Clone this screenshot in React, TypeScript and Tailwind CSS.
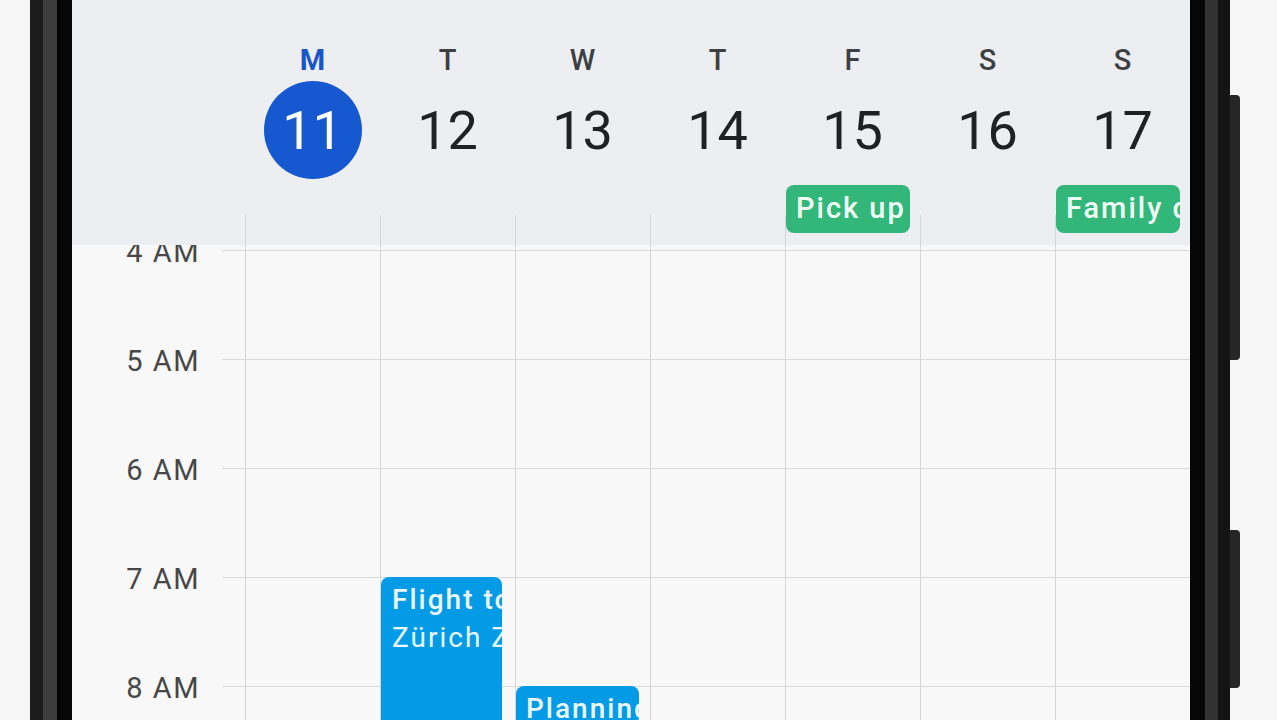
import React from "react";

const days = [
  { l: "M", n: "11", today: true },
  { l: "T", n: "12" },
  { l: "W", n: "13" },
  { l: "T", n: "14" },
  { l: "F", n: "15", chip: "Pick up" },
  { l: "S", n: "16" },
  { l: "S", n: "17", chip: "Family day" },
];

const hours = ["4 AM", "5 AM", "6 AM", "7 AM", "8 AM", "9 AM"];

export default function App() {
  return (
    <div
      className="w-[1277px] h-[720px] overflow-hidden flex bg-[#f6f6f6]"
      style={{ fontFamily: "Roboto, 'Noto Sans', sans-serif" }}
    >
      <div className="w-[30px] shrink-0" />
      {/* left bezel */}
      <div className="flex shrink-0">
        <div className="w-[13px] bg-[#1c1c1c]" />
        <div className="w-[14px] bg-[#3d3d3d]" />
        <div className="w-[15px] bg-[#060606]" />
      </div>

      {/* screen */}
      <div className="w-[1118px] shrink-0 flex flex-col bg-[#f8f8f8]">
        {/* header */}
        <div className="h-[245px] shrink-0 flex bg-[#eceef1] relative z-10">
          <div className="w-[173px] shrink-0" />
          {days.map((d, i) => (
            <div key={i} className="w-[135px] shrink-0 flex flex-col items-center pt-[42px]">
              <div
                className={
                  d.today
                    ? "h-[36px] leading-[36px] text-[29px] font-bold text-[#1a56c8]"
                    : "h-[36px] leading-[36px] text-[29px] font-medium text-[#3c4043]"
                }
              >
                {d.l}
              </div>
              <div
                className={
                  d.today
                    ? "mt-[3px] w-[98px] h-[98px] rounded-full bg-[#1558d0] flex items-center justify-center text-[54px] text-white"
                    : "mt-[3px] w-[98px] h-[98px] flex items-center justify-center text-[54px] text-[#202124]"
                }
              >
                {d.n}
              </div>
              <div className="mt-[6px] self-stretch flex-1 relative">
                <div className="mt-[30px] h-[30px] border-l border-[#d6d6d6]" />
                {d.chip && (
                  <div className="absolute top-0 left-[1px] w-[124px] h-[48px] rounded-[8px] bg-[#33b679] overflow-hidden whitespace-nowrap pl-[10px] text-[29px] tracking-[2px] leading-[46px] font-medium text-[#effff6]">
                    {d.chip}
                  </div>
                )}
              </div>
            </div>
          ))}
        </div>

        {/* body */}
        <div className="flex-1 overflow-hidden flex">
          {/* gutter */}
          <div className="w-[173px] shrink-0 flex flex-col pt-[5px]">
            {hours.map((h) => (
              <div key={h} className="h-[109px] shrink-0 flex">
                <div className="w-[150px] shrink-0 pr-[22px] text-right -mt-[17px] h-[38px] leading-[38px] text-[29px] tracking-[1.5px] text-[#474747]">
                  {h}
                </div>
                <div className="flex-1 border-t border-[#d9d9d9]" />
              </div>
            ))}
          </div>
          {days.map((d, i) => (
            <div key={i} className="w-[135px] shrink-0 flex flex-col pt-[5px] border-l border-[#d6d6d6]">
              {hours.map((h, j) => (
                <div key={h} className="h-[109px] shrink-0 border-t border-[#d9d9d9]">
                  {i === 1 && j === 3 && (
                    <div className="relative z-10 -mt-[1px] w-[121px] h-[200px] rounded-[8px] bg-[#039be5] overflow-hidden whitespace-nowrap pl-[11px] pt-[4px] text-[#eaf8ff] text-[28px] tracking-[2px] leading-[38px]">
                      <div className="font-medium">Flight to Zürich</div>
                      <div>Zürich Zürich</div>
                    </div>
                  )}
                  {i === 2 && j === 4 && (
                    <div className="relative z-10 -mt-[1px] w-[123px] h-[120px] rounded-[8px] bg-[#039be5] overflow-hidden whitespace-nowrap pl-[10px] pt-[4px] text-[#eaf8ff] text-[28px] tracking-[2px] leading-[38px]">
                      <div className="font-medium">Planning</div>
                    </div>
                  )}
                </div>
              ))}
            </div>
          ))}
        </div>
      </div>

      {/* right bezel */}
      <div className="flex shrink-0">
        <div className="w-[15px] bg-[#060606]" />
        <div className="w-[13px] bg-[#323232]" />
        <div className="w-[12px] bg-[#141414]" />
      </div>
      {/* side buttons */}
      <div className="w-[10px] shrink-0 flex flex-col">
        <div className="h-[95px] shrink-0" />
        <div className="h-[265px] shrink-0 bg-[#262626] rounded-r-[4px]" />
        <div className="h-[170px] shrink-0" />
        <div className="h-[158px] shrink-0 bg-[#262626] rounded-r-[4px]" />
      </div>
    </div>
  );
}
